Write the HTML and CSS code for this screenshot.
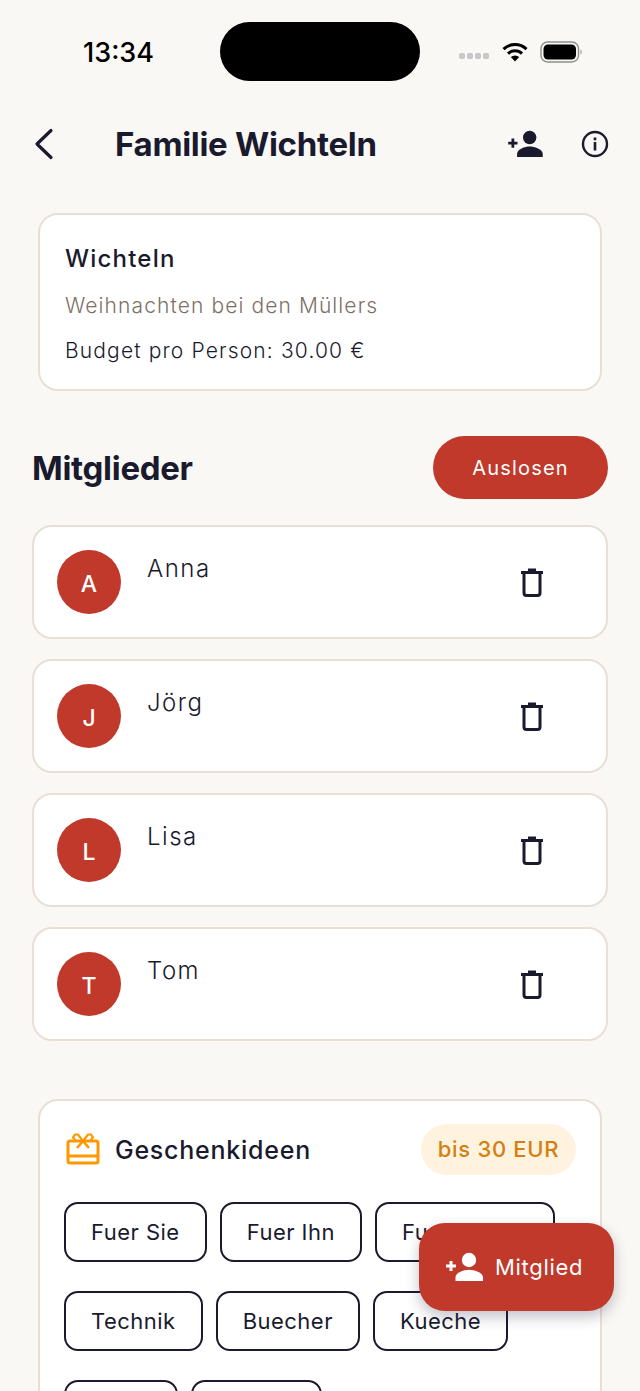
FILE: index.html
```html
<!DOCTYPE html>
<html lang="de">
<head>
    <meta charset="UTF-8">
    <title>Familie Wichteln</title>
    <link rel="stylesheet" href="styles.css">
</head>
<body>
    <div class="screen">
        <!-- status bar -->
        <div class="status-bar">
            <span class="status-time">13:34</span>
            <div class="island"></div>
            <div class="status-icons">
                <span class="signal"><i></i><i></i><i></i><i></i></span>
                <svg class="wifi" width="26" height="20" viewBox="0 0 26 20">
                    <path d="M1.5 7.2a16.5 16.5 0 0 1 23 0" fill="none" stroke="#000" stroke-width="3"/>
                    <path d="M6 11.6a10.2 10.2 0 0 1 14 0" fill="none" stroke="#000" stroke-width="3"/>
                    <path d="M13 19.5l-4.2-4.4a6 6 0 0 1 8.4 0z" fill="#000"/>
                </svg>
                <svg class="battery" width="44" height="22" viewBox="0 0 44 22">
                    <rect x="1" y="1" width="37.5" height="20" rx="6.5" fill="none" stroke="#8e8e8e" stroke-width="1.4"/>
                    <rect x="3.5" y="3.5" width="32.5" height="15" rx="4.5" fill="#000"/>
                    <path d="M40.5 8.5c1.5.4 1.5 4.600 0 5z" fill="#8e8e8e"/>
                </svg>
            </div>
        </div>

        <!-- header -->
        <div class="topbar">
            <svg class="back" width="22" height="32" viewBox="0 0 22 32">
                <path d="M18 2.500L4 16l14 13.500" fill="none" stroke="#1a1a2e" stroke-width="3.200" stroke-linecap="round" stroke-linejoin="round"/>
            </svg>
            <h1 class="page-title">Familie Wichteln</h1>
            <svg class="add-person" width="36" height="28" viewBox="0 0 38 30">
                <circle cx="24" cy="8" r="7.200" fill="#1a1a2e"/>
                <path d="M10.500 29v-3.500c0-5 8.500-7.800 13.500-7.800s14 2.800 14 7.800V29z" fill="#1a1a2e"/>
                <path d="M1 14h10M6 9v10" stroke="#1a1a2e" stroke-width="3" fill="none"/>
            </svg>
            <svg class="info" width="28" height="28" viewBox="0 0 28 28">
                <circle cx="14" cy="14" r="12" fill="none" stroke="#1a1a2e" stroke-width="2.400"/>
                <rect x="12.700" y="12" width="2.600" height="8.500" fill="#1a1a2e"/>
                <rect x="12.700" y="7.500" width="2.600" height="2.800" fill="#1a1a2e"/>
            </svg>
        </div>

        <!-- group info -->
        <div class="card info-card">
            <div class="card-title">Wichteln</div>
            <div class="card-sub">Weihnachten bei den Müllers</div>
            <div class="card-budget">Budget pro Person: 30.00 €</div>
        </div>

        <div class="section-head">
            <h2 class="section-title">Mitglieder</h2>
            <button class="draw-btn" type="button">Auslosen</button>
        </div>

        <div class="member-list">
            <div class="member">
                <div class="avatar">A</div>
                <div class="member-name">Anna</div>
                <svg class="trash" width="24" height="32" viewBox="0 0 24 32"><use href="#trash-icon"/></svg>
            </div>
            <div class="member">
                <div class="avatar">J</div>
                <div class="member-name">Jörg</div>
                <svg class="trash" width="24" height="32" viewBox="0 0 24 32"><use href="#trash-icon"/></svg>
            </div>
            <div class="member">
                <div class="avatar">L</div>
                <div class="member-name">Lisa</div>
                <svg class="trash" width="24" height="32" viewBox="0 0 24 32"><use href="#trash-icon"/></svg>
            </div>
            <div class="member">
                <div class="avatar">T</div>
                <div class="member-name">Tom</div>
                <svg class="trash" width="24" height="32" viewBox="0 0 24 32"><use href="#trash-icon"/></svg>
            </div>
        </div>

        <!-- gift ideas -->
        <div class="card gift-card">
            <div class="gift-head">
                <svg class="gift-icon" width="34" height="32" viewBox="0 0 34 32">
                    <rect x="2" y="8" width="30" height="22" rx="2" fill="none" stroke="#ff9800" stroke-width="3"/>
                    <path d="M2 23h30" stroke="#ff9800" stroke-width="3" fill="none"/>
                    <path d="M17 8l-5-6.500h-3l-2 3 3 3.500zM17 8l5-6.500h3l2 3-3 3.500z" fill="none" stroke="#ff9800" stroke-width="2.200"/>
                    <path d="M17 8l-6 7M17 8l6 7" stroke="#ff9800" stroke-width="2.600" fill="none"/>
                </svg>
                <div class="gift-title">Geschenkideen</div>
                <div class="price-tag">bis 30 EUR</div>
            </div>
            <div class="chips">
                <span class="chip">Fuer Sie</span>
                <span class="chip">Fuer Ihn</span>
                <span class="chip">Fuer Kinder</span>
                <span class="chip">Technik</span>
                <span class="chip">Buecher</span>
                <span class="chip">Kueche</span>
                <span class="chip chip-short"></span>
                <span class="chip chip-mid"></span>
            </div>
        </div>

        <button class="fab" type="button">
            <svg width="38" height="30" viewBox="0 0 38 30">
                <circle cx="24" cy="8" r="7.200" fill="#fff"/>
                <path d="M10.500 29v-3.500c0-5 8.500-7.800 13.500-7.800s14 2.800 14 7.800V29z" fill="#fff"/>
                <path d="M1 14h10M6 9v10" stroke="#fff" stroke-width="3" fill="none"/>
            </svg>
            Mitglied
        </button>
    </div>

    <svg width="0" height="0" class="defs">
        <symbol id="trash-icon" viewBox="0 0 24 32">
            <path d="M1 6.500h22" stroke="#1a1a2e" stroke-width="3" fill="none"/>
            <path d="M8 5V2.500h8V5" fill="#1a1a2e"/>
            <path d="M4 8v19c0 1.500 1 2.500 2.500 2.500h11c1.500 0 2.500-1 2.500-2.500V8" stroke="#1a1a2e" stroke-width="3" fill="none"/>
        </symbol>
    </svg>
</body>
</html>
```

FILE: styles.css
```css
html, body {
    margin: 0;
    padding: 0;
    height: 1391px;
    overflow: hidden;
}

body {
    background: #faf8f5;
    font-family: Inter, "Liberation Sans", sans-serif;
    color: #1a1a2e;
}

.defs {
    position: absolute;
}

.screen {
    position: relative;
    height: 1391px;
    overflow: hidden;
    padding: 22px 32px 0;
    box-sizing: border-box;
}

/* status bar */
.status-bar {
    display: flex;
    align-items: center;
    height: 59px;
}

.status-time {
    width: 188px;
    padding-left: 51px;
    box-sizing: border-box;
    font-size: 27px;
    font-weight: 500;
    color: #000;
    margin-top: 1px;
}

.island {
    width: 200px;
    height: 59px;
    border-radius: 30px;
    background: #000;
}

.status-icons {
    display: flex;
    align-items: center;
    margin-left: 39px;
}

.signal {
    display: flex;
    gap: 2px;
    margin-top: 8px;
    margin-right: 13px;
}

.signal i {
    width: 6px;
    height: 6px;
    border-radius: 2px;
    background: #c8c8c8;
}

.wifi {
    margin-right: 12px;
}

/* header */
.topbar {
    display: flex;
    align-items: center;
    height: 44px;
    margin-top: 41px;
}

.back {
    margin-left: 1px;
}

.page-title {
    margin: 0 0 0 60px;
    flex: 1;
    font-size: 33px;
    font-weight: 700;
    letter-spacing: -0.3px;
}

.add-person {
    margin-right: 38px;
}

.info {
    margin-right: -1px;
}

/* cards */
.card {
    background: #fff;
    border: 2px solid #e9dfd4;
    border-radius: 20px;
    margin: 0 6px;
}

.info-card {
    margin-top: 47px;
    height: 178px;
    box-sizing: border-box;
    padding: 29px 25px 0;
}

.card-title {
    font-size: 24px;
    font-weight: 500;
    letter-spacing: 1.2px;
    line-height: 30px;
}

.card-sub {
    margin-top: 17px;
    font-size: 21px;
    font-weight: 300;
    color: #7d7066;
    letter-spacing: 1.1px;
    line-height: 30px;
}

.card-budget {
    margin-top: 15px;
    font-size: 21px;
    font-weight: 300;
    letter-spacing: 1.15px;
    line-height: 30px;
}

.section-head {
    display: flex;
    align-items: center;
    justify-content: space-between;
    margin-top: 45px;
}

.section-title {
    margin: 0;
    font-size: 33px;
    font-weight: 700;
    letter-spacing: -0.3px;
}

.draw-btn {
    width: 175px;
    height: 63px;
    border: none;
    border-radius: 32px;
    background: #c0392b;
    color: #fff;
    font-family: inherit;
    font-size: 20px;
    font-weight: 400;
    letter-spacing: 1.2px;
}

/* members */
.member-list {
    display: flex;
    flex-direction: column;
    gap: 20px;
    margin-top: 26px;
}

.member {
    display: flex;
    align-items: center;
    height: 114px;
    box-sizing: border-box;
    background: #fff;
    border: 2px solid #e9dfd4;
    border-radius: 20px;
    padding: 0 62px 0 23px;
}

.avatar {
    width: 64px;
    height: 64px;
    box-sizing: border-box;
    padding-top: 3px;
    border-radius: 50%;
    background: #c0392b;
    color: #fff;
    font-size: 23px;
    font-weight: 500;
    display: flex;
    align-items: center;
    justify-content: center;
}

.member-name {
    flex: 1;
    align-self: flex-start;
    margin-top: 27px;
    margin-left: 26px;
    font-size: 24px;
    font-weight: 300;
    letter-spacing: 1.5px;
    line-height: 30px;
}

/* gift ideas */
.gift-card {
    margin-top: 58px;
    height: 340px;
    padding: 22px 24px 0;
}

.gift-head {
    display: flex;
    align-items: center;
    height: 52px;
}

.gift-icon {
    margin-left: 2px;
}

.gift-title {
    flex: 1;
    margin-left: 15px;
    margin-top: 2px;
    font-size: 25px;
    font-weight: 500;
    letter-spacing: 0.75px;
}

.price-tag {
    width: 155px;
    height: 51px;
    line-height: 51px;
    text-align: center;
    border-radius: 26px;
    background: #fff3e0;
    color: #d4800f;
    font-size: 22px;
    font-weight: 500;
    letter-spacing: 0.7px;
}

.chips {
    display: flex;
    flex-wrap: wrap;
    gap: 29px 13px;
    margin-top: 27px;
    width: 500px;
}

.chip {
    height: 60px;
    line-height: 56px;
    box-sizing: border-box;
    padding: 0 25px;
    border: 2px solid #1a1a2e;
    border-radius: 14px;
    font-size: 22px;
    letter-spacing: 0.48px;
}

.chip-short {
    width: 114px;
}

.chip-mid {
    width: 131px;
}

.fab {
    position: absolute;
    left: 419px;
    top: 1223px;
    width: 195px;
    height: 88px;
    display: flex;
    align-items: center;
    gap: 12px;
    padding: 0 0 0 26px;
    box-sizing: border-box;
    border: none;
    border-radius: 26px;
    background: #c0392b;
    color: #fff;
    font-family: inherit;
    font-size: 22px;
    font-weight: 400;
    letter-spacing: 0.7px;
    box-shadow: 0 6px 14px rgba(40, 40, 70, 0.28);
}
```
